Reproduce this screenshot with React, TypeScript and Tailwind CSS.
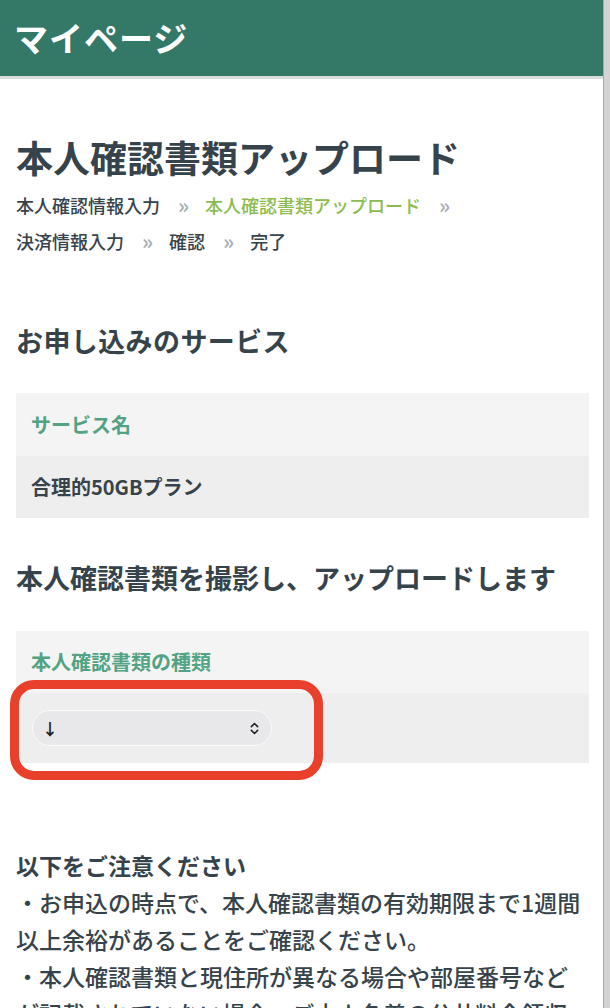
import { ChevronsUpDown } from "lucide-react";

const steps = [
  { label: "本人確認情報入力", active: false },
  { label: "本人確認書類アップロード", active: true },
  { label: "決済情報入力", active: false },
  { label: "確認", active: false },
  { label: "完了", active: false },
];

export default function App() {
  return (
    <div className="relative flex min-h-screen bg-white text-[#37434b] font-['Noto_Sans_CJK_JP','Noto_Sans',sans-serif]">
      <div className="flex-1 min-w-0">
        {/* Header */}
        <header className="h-[79px] bg-[#347868] border-b-[3px] border-[#dcdcdc] px-[14px] flex items-center">
          <h1 className="text-white text-[34px] font-bold leading-none tracking-[1px]">マイページ</h1>
        </header>

        <main className="pl-4 pr-[14px] pb-10">
          <h2 className="mt-[54px] text-[37px] leading-[48px] font-bold">本人確認書類アップロード</h2>

          {/* Steps */}
          <div className="mt-[6px] flex flex-wrap text-[18px] leading-[36px] font-medium">
            {steps.map((s, i) => (
              <div key={s.label} className="flex whitespace-nowrap">
                <span className={s.active ? "text-[#8cbc4f]" : ""}>{s.label}</span>
                {i < steps.length - 1 && (
                  <span className="ml-[18px] mr-[16px] text-[21px] text-[#a9b1b6] font-bold">»</span>
                )}
              </div>
            ))}
          </div>

          {/* Service */}
          <h3 className="mt-[62px] text-[27px] leading-[40px] font-bold tracking-[0.4px]">お申し込みのサービス</h3>
          <div className="mt-[32px]">
            <div className="h-[63px] bg-[#f4f4f4] px-[15px] flex items-center text-[20px] font-bold text-[#52a383]">
              サービス名
            </div>
            <div className="h-[62px] bg-[#eeeeee] px-[15px] flex items-center text-[20px] font-bold">
              合理的50GBプラン
            </div>
          </div>

          {/* Upload */}
          <h3 className="mt-[40px] text-[27px] leading-[40px] font-bold">本人確認書類を撮影し、アップロードします</h3>
          <div className="mt-[33px]">
            <div className="h-[62px] bg-[#f4f4f4] px-[15px] flex items-center text-[20px] font-bold text-[#52a383]">
              本人確認書類の種類
            </div>
            <div className="relative h-[70px] bg-[#eeeeee] px-[16px] flex items-center">
              <div className="w-[240px] h-[36px] rounded-full bg-[#e8e8ea] border-[1.5px] border-[#fafafa] flex items-center justify-between pl-[9px] pr-[9px] text-[#222]">
                <span className="text-[16px] font-bold leading-none">↓</span>
                <ChevronsUpDown size={15} strokeWidth={2.5} />
              </div>
              <div className="absolute left-[-6px] top-[-13px] w-[313px] h-[100px] rounded-[24px] border-[9px] border-[#e8402a] pointer-events-none" />
            </div>
          </div>

          {/* Notes */}
          <div className="mt-[84px] text-[23px] leading-[37px] font-medium">
            <p className="font-bold">以下をご注意ください</p>
            <p>・お申込の時点で、本人確認書類の有効期限まで1週間以上余裕があることをご確認ください。</p>
            <p>・本人確認書類と現住所が異なる場合や部屋番号などが記載されていない場合、ご本人名義の公共料金領収書などの補助書類が必要です。</p>
          </div>
        </main>
      </div>
      <div className="w-[7px] shrink-0 border-l border-[#a8a8a8] bg-[#d3d3d3]" />
    </div>
  );
}
